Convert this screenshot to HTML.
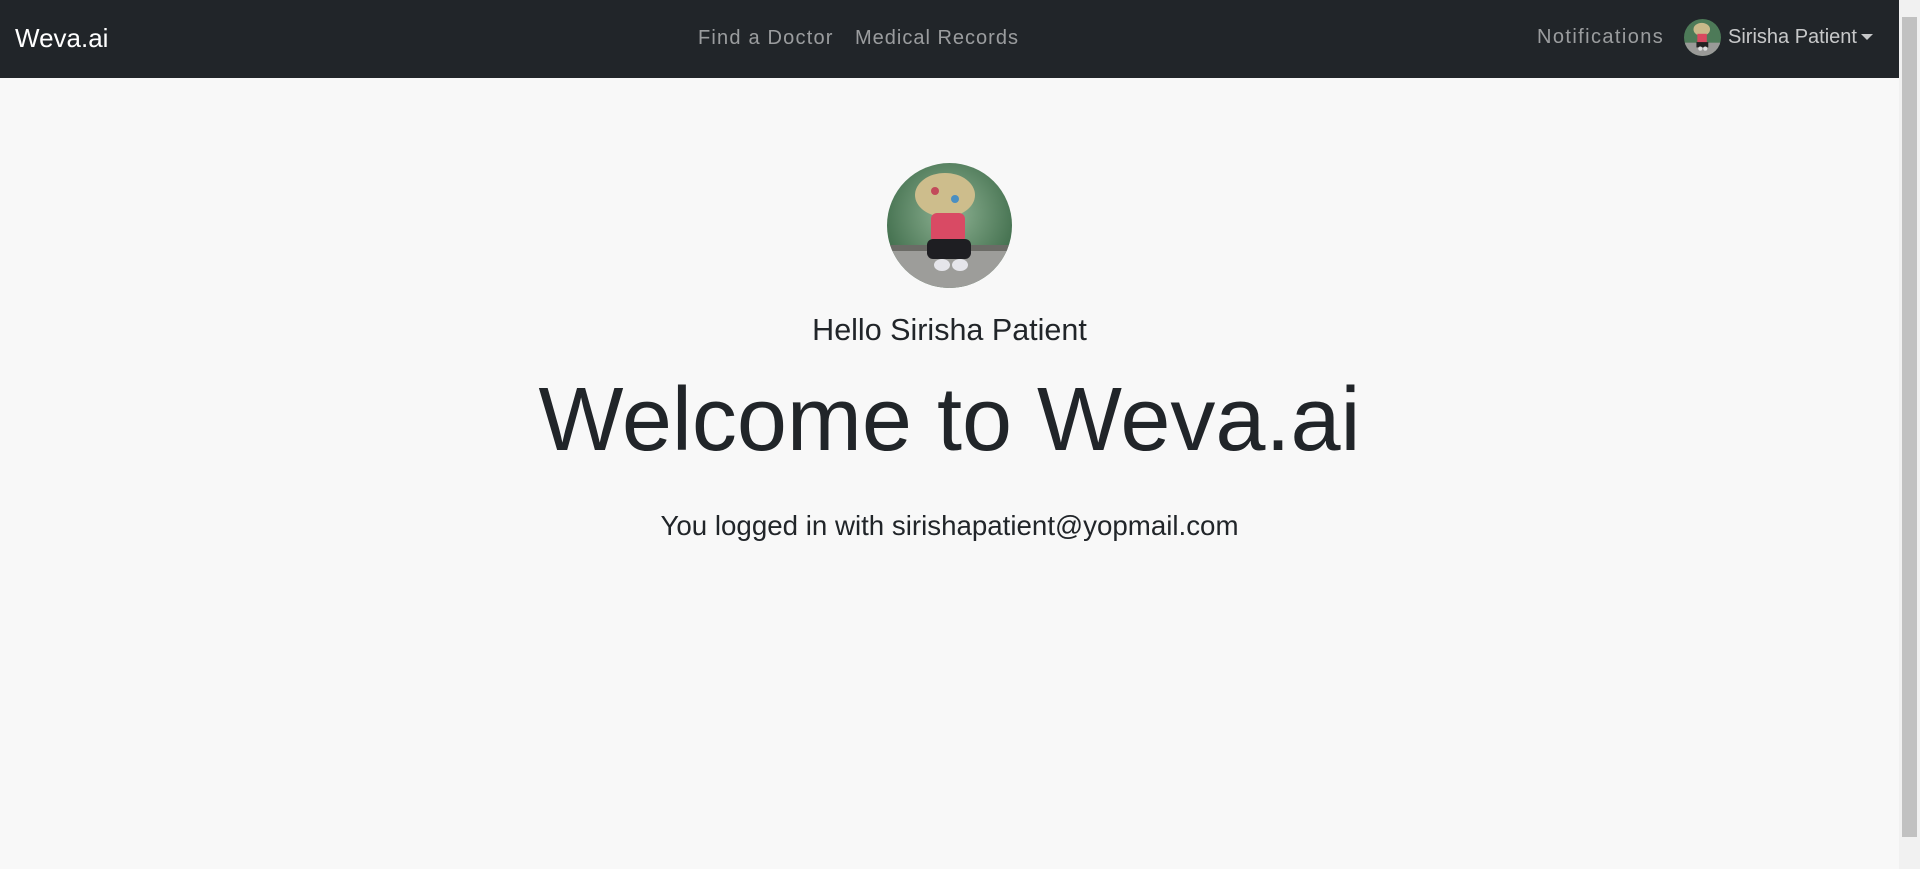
<!DOCTYPE html>
<html><head><meta charset="utf-8"><style>
html,body{margin:0;padding:0;width:1920px;height:869px;overflow:hidden;background:#f8f8f8;font-family:"Liberation Sans",sans-serif;color:#212529}
.nav{position:absolute;left:0;top:0;width:1899px;height:78px;background:#212529}
.t{position:absolute;white-space:nowrap;line-height:1}
.sb{position:absolute;right:0;top:0;width:21px;height:869px;background:#f1f1f1}
.sb .th{position:absolute;left:3px;top:17px;width:15px;height:820px;background:#c1c1c1}
.c{position:absolute;left:0;width:1899px;text-align:center;line-height:1;white-space:nowrap}
</style></head><body>
<div class="nav">
<div class="t" style="left:15px;top:25px;font-size:26px;color:#fff">Weva.ai</div>
<div class="t" style="left:698px;top:28px;font-size:20px;letter-spacing:1.2px;color:rgba(255,255,255,.55)">Find a Doctor</div>
<div class="t" style="left:855px;top:28px;font-size:20px;letter-spacing:1px;color:rgba(255,255,255,.55)">Medical Records</div>
<div class="t" style="left:1537px;top:27px;font-size:20px;letter-spacing:1.4px;color:rgba(255,255,255,.55)">Notifications</div>
<svg style="position:absolute;left:1684px;top:19px" width="37" height="37" viewBox="0 0 125 125"><defs><clipPath id="a"><circle cx="62.5" cy="62.5" r="62.5"/></clipPath></defs><g clip-path="url(#a)"><rect width="125" height="125" fill="#4d7a58"/><rect y="80" width="125" height="45" fill="#9a9a98"/><ellipse cx="60" cy="35" rx="28" ry="22" fill="#c9b98a"/><rect x="45" y="50" width="32" height="30" fill="#d9485f"/><rect x="42" y="78" width="40" height="18" fill="#222"/><circle cx="55" cy="100" r="7" fill="#ddd"/><circle cx="72" cy="100" r="7" fill="#ddd"/></g></svg>
<div class="t" style="left:1728px;top:27px;font-size:20px;color:rgba(255,255,255,.75)">Sirisha Patient</div>
<div style="position:absolute;left:1861px;top:34px;border-left:6px solid transparent;border-right:6px solid transparent;border-top:6px solid rgba(255,255,255,.75)"></div>
</div>
<svg style="position:absolute;left:887px;top:163px" width="125" height="125" viewBox="0 0 125 125"><defs><clipPath id="b"><circle cx="62.5" cy="62.5" r="62.5"/></clipPath><radialGradient id="g" cx=".5" cy=".4" r=".7"><stop offset="0" stop-color="#8fb394"/><stop offset="1" stop-color="#2f5e3c"/></radialGradient></defs><g clip-path="url(#b)"><rect width="125" height="125" fill="url(#g)"/><rect y="85" width="125" height="40" fill="#9d9d9a"/><rect y="82" width="125" height="6" fill="#6b6b66"/><ellipse cx="58" cy="32" rx="30" ry="22" fill="#cdbd8c"/><circle cx="48" cy="28" r="4" fill="#c24a5a"/><circle cx="68" cy="36" r="4" fill="#4a8fc2"/><rect x="44" y="50" width="34" height="30" rx="6" fill="#d94a64"/><rect x="40" y="76" width="44" height="20" rx="6" fill="#1e1e22"/><ellipse cx="55" cy="102" rx="8" ry="6" fill="#e5e5ea"/><ellipse cx="73" cy="102" rx="8" ry="6" fill="#e5e5ea"/></g></svg>
<div class="c" style="top:315px;font-size:30.5px">Hello Sirisha Patient</div>
<div class="c" style="top:375px;font-size:90px">Welcome to Weva.ai</div>
<div class="c" style="top:512px;font-size:27.7px">You logged in with sirishapatient@yopmail.com</div>
<div class="sb"><div class="th"></div></div>
</body></html>
